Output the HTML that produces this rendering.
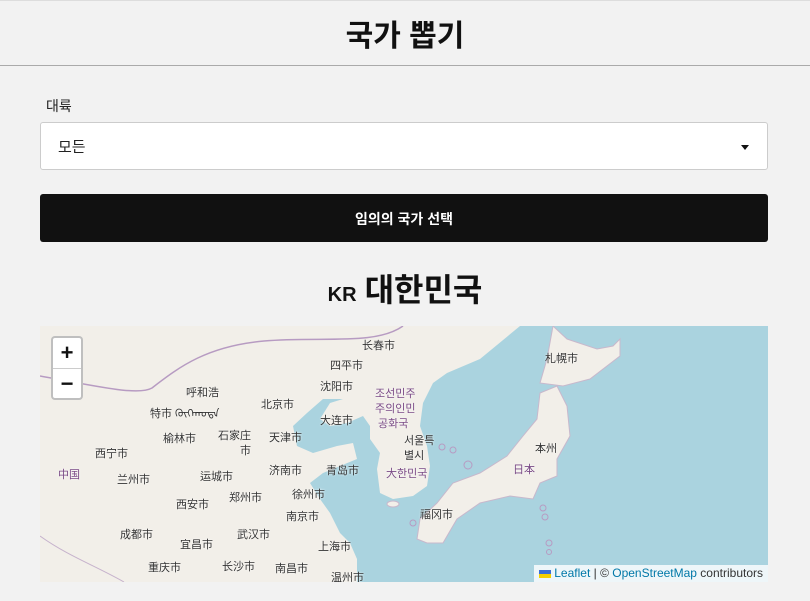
<!DOCTYPE html>
<html><head><meta charset="utf-8"><style>
*{margin:0;padding:0;box-sizing:border-box}
body{width:810px;height:601px;background:#f2f2f2;font-family:"Liberation Sans","Noto Sans CJK KR",sans-serif;position:relative;overflow:hidden}
.hdr{position:absolute;left:0;top:0;width:810px;height:66px;border-top:1px solid #ddd;border-bottom:1px solid #aaa}
.hdr h1{text-align:center;font-size:30px;line-height:72px;font-weight:bold;color:#111}
.lbl{position:absolute;left:46px;top:96px;font-size:14px;color:#222}
.sel{position:absolute;left:40px;top:122px;width:728px;height:48px;background:#fff;border:1px solid #ccc;border-radius:3px;font-size:15px;padding:0 17px;line-height:50px;color:#222}
.sel:after{content:"";position:absolute;right:18px;top:22px;border:4px solid transparent;border-top:5px solid #111}
.btn{position:absolute;left:40px;top:194px;width:728px;height:48px;background:#111;border-radius:3px;color:#fff;font-size:14px;font-weight:bold;text-align:center;line-height:51px}
.h2{position:absolute;left:0;width:810px;top:265px;text-align:center;font-size:32px;font-weight:bold;color:#111}
.h2 small{font-size:20px;margin-right:8px}
.map{position:absolute;left:40px;top:326px;width:728px;height:256px;overflow:hidden;background:#f2efe9}
.map span{position:absolute;font-size:11px;color:#333;white-space:nowrap;text-shadow:0 0 2px #fff}
.map .p{color:#7a4a86}
.zm{position:absolute;left:11px;top:10px;width:32px;height:64px;background:#fff;border:2px solid rgba(0,0,0,.25);border-radius:4px}
.zm div{height:30px;text-align:center;font-size:22px;font-weight:bold;line-height:30px;color:#111}
.zm div+div{border-top:1px solid #ccc}
.attr{position:absolute;right:0;bottom:0;background:rgba(255,255,255,.8);font-size:12px;padding:0 5px;line-height:17px;color:#333}
.attr a{color:#0078a8;text-decoration:none}
</style></head><body>
<div class="hdr"><h1>국가 뽑기</h1></div>
<div class="lbl">대륙</div>
<div class="sel">모든</div>
<div class="btn">임의의 국가 선택</div>
<div class="h2"><small>KR</small>대한민국</div>
<div class="map">
<svg width="728" height="256" style="position:absolute;left:0;top:0">
<polygon fill="#aad3df" points="480,0 440,33 407,47 393,57 383,77 380,100 387,120 390,140 387,160 373,170 353,173 340,167 337,143 340,127 330,113 330,100 323,90 307,97 290,100 280,93 290,77 303,73 283,73 267,87 253,100 257,120 273,127 297,120 313,117 317,133 283,147 270,157 280,173 290,187 300,207 310,217 317,233 317,256 728,256 728,0"/>
<polygon fill="#f2efe9" stroke="#c8b8cc" stroke-width="1" points="377,213 380,193 397,177 413,157 440,147 467,130 483,110 497,93 500,67 517,60 527,80 530,110 517,133 517,150 500,157 493,173 470,170 440,177 417,193 403,217 387,217"/>
<polygon fill="#f2efe9" stroke="#c8b8cc" stroke-width="1" points="500,57 507,33 513,0 527,13 557,23 573,20 580,13 580,30 550,53 523,60"/>
<ellipse cx="353" cy="178" rx="6" ry="3" fill="#f2efe9" stroke="#c8b8cc"/>
<g fill="none" stroke="#b79bc2" stroke-width="1"><circle cx="402" cy="121" r="3"/><circle cx="413" cy="124" r="3"/><circle cx="428" cy="139" r="4"/><circle cx="503" cy="182" r="3"/><circle cx="505" cy="191" r="3"/><circle cx="509" cy="217" r="3"/><circle cx="509" cy="226" r="2.5"/><circle cx="373" cy="197" r="3"/></g>
<path d="M0,50 C56,60 98,70 112,62 C140,40 168,20 224,15 C280,10 335,20 363,0" fill="none" stroke="#b79bc2" stroke-width="1.5"/>
<path d="M0,210 C28,230 56,240 84,256" fill="none" stroke="#c6b2cc" stroke-width="1"/>
</svg>
<div class="zm"><div>+</div><div>−</div></div>
<span style="left:322px;top:11px">长春市</span>
<span style="left:290px;top:31px">四平市</span>
<span style="left:280px;top:52px">沈阳市</span>
<span class="p" style="left:335px;top:59px">조선민주</span>
<span class="p" style="left:335px;top:74px">주의인민</span>
<span class="p" style="left:338px;top:89px">공화국</span>
<span style="left:146px;top:58px">呼和浩</span>
<span style="left:110px;top:76px">特市 ᠬᠥᠬᠡᠬᠣᠲᠠ</span>
<span style="left:221px;top:70px">北京市</span>
<span style="left:280px;top:86px">大连市</span>
<span style="left:123px;top:104px">榆林市</span>
<span style="left:178px;top:101px">石家庄</span>
<span style="left:200px;top:116px">市</span>
<span style="left:229px;top:103px">天津市</span>
<span style="left:364px;top:106px">서울특</span>
<span style="left:364px;top:121px">별시</span>
<span style="left:55px;top:119px">西宁市</span>
<span style="left:495px;top:114px">本州</span>
<span class="p" style="left:18px;top:140px">中国</span>
<span style="left:77px;top:145px">兰州市</span>
<span style="left:160px;top:142px">运城市</span>
<span style="left:229px;top:136px">济南市</span>
<span style="left:286px;top:136px">青岛市</span>
<span class="p" style="left:346px;top:139px">大한민국</span>
<span class="p" style="left:473px;top:135px">日本</span>
<span style="left:189px;top:163px">郑州市</span>
<span style="left:252px;top:160px">徐州市</span>
<span style="left:136px;top:170px">西安市</span>
<span style="left:246px;top:182px">南京市</span>
<span style="left:380px;top:180px">福冈市</span>
<span style="left:505px;top:24px">札幌市</span>
<span style="left:80px;top:200px">成都市</span>
<span style="left:140px;top:210px">宜昌市</span>
<span style="left:197px;top:200px">武汉市</span>
<span style="left:278px;top:212px">上海市</span>
<span style="left:108px;top:233px">重庆市</span>
<span style="left:182px;top:232px">长沙市</span>
<span style="left:235px;top:234px">南昌市</span>
<span style="left:291px;top:243px">温州市</span>
<div class="attr"><span style="position:static;display:inline-block;width:12px;height:8px;background:linear-gradient(#3b6fd6 50%,#f5d000 50%);vertical-align:middle;text-shadow:none"></span> <a>Leaflet</a> | © <a>OpenStreetMap</a> contributors</div>
</div>
</body></html>
